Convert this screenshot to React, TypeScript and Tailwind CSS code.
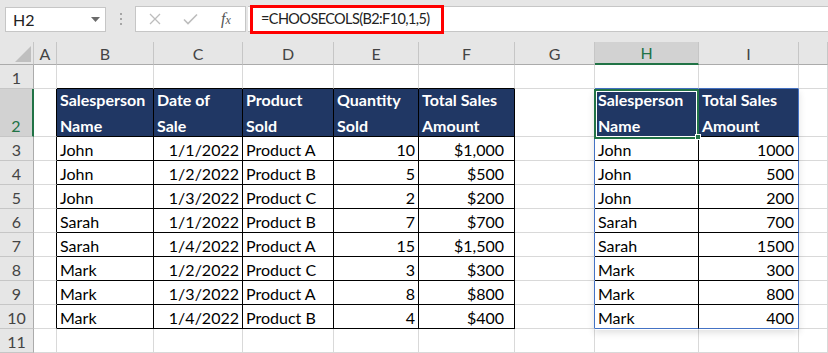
import React from "react";

const GRID = "#d9d9d9";
const BLACK = "#000000";
const BLUE = "#4472c4";
const HDR_SEP = "#c6c6c6";
const HDR_BOTTOM = "#ababab";

type CellDef = {
  text?: React.ReactNode;
  lines?: string[];
  align?: "left" | "right" | "center";
  header?: boolean;
  pr?: string;
  r?: string;
  b?: string;
};

const cols = ["", "A", "B", "C", "D", "E", "F", "G", "H", "I", ""];

const data: [string, string, string, number, string][] = [
  ["John", "1/1/2022", "Product A", 10, "$1,000"],
  ["John", "1/2/2022", "Product B", 5, "$500"],
  ["John", "1/3/2022", "Product C", 2, "$200"],
  ["Sarah", "1/1/2022", "Product B", 7, "$700"],
  ["Sarah", "1/4/2022", "Product A", 15, "$1,500"],
  ["Mark", "1/2/2022", "Product C", 3, "$300"],
  ["Mark", "1/3/2022", "Product A", 8, "$800"],
  ["Mark", "1/4/2022", "Product B", 4, "$400"],
];

const amounts = ["1000", "500", "200", "700", "1500", "300", "800", "400"];

function Cell({ c, row }: { c: CellDef; row: number }) {
  const style: React.CSSProperties = {
    borderRightColor: c.r ?? GRID,
    borderBottomColor: c.b ?? GRID,
  };
  const justify =
    c.align === "right" ? "justify-end" : c.align === "center" ? "justify-center" : "justify-start";
  return (
    <div
      className={`flex items-end overflow-hidden border-r border-b ${justify} ${
        c.header ? "bg-[#203764] text-white font-bold text-[16px]" : "bg-white text-black text-[16px]"
      } ${c.align === "right" ? (c.pr ?? "pr-[3px]") : "pl-[3px]"}`}
      style={style}
      data-row={row}
    >
      {c.lines ? (
        <div className="flex flex-col gap-[5px]">
          {c.lines.map((l, i) => (
            <span key={i} className="whitespace-nowrap leading-[21px]">
              {l}
            </span>
          ))}
        </div>
      ) : (
        <span className="whitespace-nowrap leading-[21px]">{c.text}</span>
      )}
    </div>
  );
}

function RowHeader({ n, active }: { n: number; active?: boolean }) {
  return (
    <div
      className={`flex items-end justify-center border-b ${
        active ? "bg-[#d2d2d2] text-[#217346] border-r-2 border-r-[#217346]" : "bg-[#e6e6e6] text-[#444] border-r border-r-[#ababab]"
      } border-b-[#c6c6c6] text-[16px]`}
    >
      <span className="leading-[21px]">{n}</span>
    </div>
  );
}

export default function App() {
  const headerLines: string[][] = [
    ["Salesperson", "Name"],
    ["Date of", "Sale"],
    ["Product", "Sold"],
    ["Quantity", "Sold"],
    ["Total Sales", "Amount"],
  ];

  const rows: React.ReactNode[] = [];

  // Row 1
  const row1: CellDef[] = [
    {},
    { r: GRID },
    { b: BLACK },
    { b: BLACK },
    { b: BLACK },
    { b: BLACK },
    { b: BLACK },
    {},
    { b: BLUE },
    { b: BLUE },
    {},
  ];
  rows.push(<RowHeader key="rh1" n={1} />);
  row1.slice(1).forEach((c, i) => rows.push(<Cell key={`r1c${i}`} c={c} row={1} />));

  // Row 2 (headers)
  rows.push(<RowHeader key="rh2" n={2} active />);
  rows.push(<Cell key="r2a" c={{ r: BLACK }} row={2} />);
  headerLines.forEach((l, i) =>
    rows.push(<Cell key={`r2h${i}`} c={{ lines: l, header: true, r: BLACK, b: BLACK }} row={2} />)
  );
  rows.push(<Cell key="r2g" c={{ r: BLUE }} row={2} />);
  rows.push(<Cell key="r2h" c={{ lines: ["Salesperson", "Name"], header: true, r: BLACK, b: BLACK }} row={2} />);
  rows.push(<Cell key="r2i" c={{ lines: ["Total Sales", "Amount"], header: true, r: BLUE, b: BLACK }} row={2} />);
  rows.push(<Cell key="r2j" c={{}} row={2} />);

  data.forEach((d, i) => {
    const rn = i + 3;
    const last = i === data.length - 1;
    rows.push(<RowHeader key={`rh${rn}`} n={rn} />);
    rows.push(<Cell key={`r${rn}a`} c={{ r: BLACK }} row={rn} />);
    rows.push(<Cell key={`r${rn}b`} c={{ text: d[0], r: BLACK, b: BLACK }} row={rn} />);
    rows.push(<Cell key={`r${rn}c`} c={{ text: d[1], align: "right", r: BLACK, b: BLACK }} row={rn} />);
    rows.push(<Cell key={`r${rn}d`} c={{ text: d[2], r: BLACK, b: BLACK }} row={rn} />);
    rows.push(<Cell key={`r${rn}e`} c={{ text: String(d[3]), align: "right", r: BLACK, b: BLACK }} row={rn} />);
    rows.push(
      <Cell key={`r${rn}f`} c={{ text: d[4], align: "right", pr: "pr-[10px]", r: BLACK, b: BLACK }} row={rn} />
    );
    rows.push(<Cell key={`r${rn}g`} c={{ r: BLUE }} row={rn} />);
    rows.push(<Cell key={`r${rn}h`} c={{ text: d[0], r: BLACK, b: last ? BLUE : BLACK }} row={rn} />);
    rows.push(
      <Cell key={`r${rn}i`} c={{ text: amounts[i], align: "right", pr: "pr-[4px]", r: BLUE, b: last ? BLUE : BLACK }} row={rn} />
    );
    rows.push(<Cell key={`r${rn}j`} c={{}} row={rn} />);
  });

  // Row 11
  rows.push(<RowHeader key="rh11" n={11} />);
  for (let i = 1; i < 11; i++) rows.push(<Cell key={`r11c${i}`} c={{}} row={11} />);

  return (
    <div
      className="relative w-[828px] h-[353px] overflow-hidden bg-[#e6e6e6]"
      style={{ fontFamily: "Lato, 'Open Sans', sans-serif" }}
    >
      {/* Formula bar */}
      <div className="flex h-[42px] items-start">
        <div className="ml-[5px] mt-[7px] flex h-[25px] w-[101px] items-center justify-between border border-[#c6c6c6] bg-white pl-[7px] pr-[5px]">
          <span className="text-[16px] leading-none text-[#222]">H2</span>
          <svg width="9" height="5" viewBox="0 0 9 5">
            <path d="M0 0 L9 0 L4.5 5 Z" fill="#6b6b6b" />
          </svg>
        </div>
        <div className="mt-[13px] ml-[14px] flex flex-col gap-[3px]">
          <div className="h-[2px] w-[2px] bg-[#a6a6a6]" />
          <div className="h-[2px] w-[2px] bg-[#a6a6a6]" />
          <div className="h-[2px] w-[2px] bg-[#a6a6a6]" />
        </div>
        <div className="ml-[13px] mt-[6px] flex h-[26px] w-[111px] items-center border border-[#c6c6c6] bg-white">
          <svg className="ml-[13px]" width="12" height="12" viewBox="0 0 12 12">
            <path d="M1 1 L11 11 M11 1 L1 11" stroke="#bdbdbd" strokeWidth="1.3" fill="none" />
          </svg>
          <svg className="ml-[22px]" width="15" height="12" viewBox="0 0 15 12">
            <path d="M1 6.5 L5 10.5 L14 1.5" stroke="#bdbdbd" strokeWidth="1.6" fill="none" />
          </svg>
          <span
            className="ml-[23px] text-[16px] italic leading-none text-[#555]"
            style={{ fontFamily: "'Liberation Serif', serif" }}
          >
            f<span className="text-[12px]">x</span>
          </span>
        </div>
        <div className="relative ml-[2px] mt-[6px] flex h-[26px] flex-1 items-center border-y border-[#c6c6c6] bg-white pl-[13px]">
          <span className="text-[14.5px] leading-none tracking-[-0.6px] text-[#222]">=CHOOSECOLS(B2:F10,1,5)</span>
        </div>
      </div>

      {/* Grid */}
      <div className="grid grid-cols-[34px_23px_97px_89px_91px_85px_96px_80px_104px_100px_29px] grid-rows-[23px_24px_48px_repeat(8,24px)_24px]">
        {/* Column headers */}
        <div className="relative border-r border-b border-r-[#c6c6c6] border-b-[#ababab] bg-[#e6e6e6]">
          <svg className="absolute left-[15px] top-[4px]" width="16" height="16" viewBox="0 0 16 16">
            <path d="M16 0 L16 16 L0 16 Z" fill="#bfbfbf" />
          </svg>
        </div>
        {cols.slice(1).map((c, i) =>
          c === "H" ? (
            <div
              key={i}
              className="flex items-center justify-center border-r border-b-2 border-r-[#c6c6c6] border-b-[#217346] bg-[#d2d2d2] pt-[1px] text-[16px] text-[#217346]"
            >
              {c}
            </div>
          ) : (
            <div
              key={i}
              className="flex items-center justify-center border-r border-b bg-[#e6e6e6] pt-[1px] text-[16px] text-[#444]"
              style={{ borderRightColor: HDR_SEP, borderBottomColor: HDR_BOTTOM }}
            >
              {c}
            </div>
          )
        )}
        {rows}
      </div>

      {/* Red annotation box */}
      <div className="pointer-events-none absolute left-[250px] top-[5px] h-[29px] w-[194px] border-[3px] border-[#ff0000]" />

      {/* Spill range shadow */}
      <div className="pointer-events-none absolute left-[594px] top-[89px] h-[241px] w-[205px] shadow-[0_3px_7px_rgba(0,0,0,0.12)]" />

      {/* Selection H2 */}
      <div className="pointer-events-none absolute left-[594px] top-[89px] h-[50px] w-[105px] border-2 border-[#217346] shadow-[inset_0_0_0_1px_#ffffff]" />
      <div className="pointer-events-none absolute left-[695px] top-[134px] h-[6px] w-[6px] border border-white bg-[#217346]" />
    </div>
  );
}
